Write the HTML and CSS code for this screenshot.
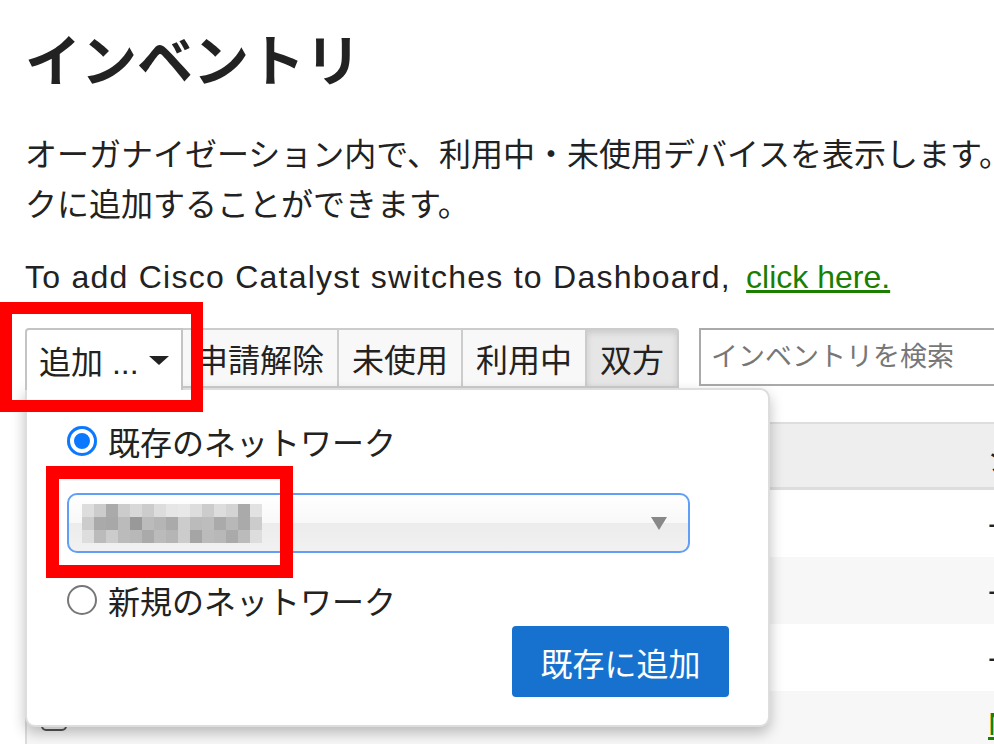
FILE: index.html
```html
<!DOCTYPE html>
<html lang="ja">
    <head>
        <meta charset="UTF-8">
        <meta name="viewport" content="width=device-width, initial-scale=1.0">
        <title>インベントリ</title>
        <link rel="stylesheet" href="styles.css">
    </head>
    <body>
        <div class="page">
            <h1 class="title">インベントリ</h1>
            <p class="intro">オーガナイゼーション内で、利用中・未使用デバイスを表示します。未使用デバイスはネットワー<br>クに追加することができます。</p>
            <p class="catalyst">To add Cisco Catalyst switches to Dashboard, <a href="#">click here.</a></p>

            <div class="inventory">
                <div class="toolbar">
                    <div class="btn-group">
                        <button class="btn btn-add">追加 ...<span class="caret"></span></button>
                        <button class="btn">申請解除</button>
                        <button class="btn">未使用</button>
                        <button class="btn">利用中</button>
                        <button class="btn active">双方</button>
                    </div>
                    <input class="search" type="text" placeholder="インベントリを検索">
                </div>

                <div class="add-menu">
                    <label class="choice"><span class="radio on"></span>既存のネットワーク</label>
                    <div class="net-select">
                        <svg class="blur" width="180" height="39" viewBox="0 0 180 39">
                            <g>
                                <rect x="0" y="0" width="12" height="13" fill="#ddd"/><rect x="12" y="0" width="12" height="13" fill="#ccc"/><rect x="24" y="0" width="12" height="13" fill="#aaa"/><rect x="36" y="0" width="12" height="13" fill="#ccc"/><rect x="48" y="0" width="12" height="13" fill="#d8d8d8"/><rect x="60" y="0" width="12" height="13" fill="#ccc"/><rect x="72" y="0" width="12" height="13" fill="#ddd"/><rect x="84" y="0" width="12" height="13" fill="#e6e6e6"/><rect x="96" y="0" width="12" height="13" fill="#e8e8e8"/><rect x="108" y="0" width="12" height="13" fill="#ddd"/><rect x="120" y="0" width="12" height="13" fill="#ccc"/><rect x="132" y="0" width="12" height="13" fill="#ddd"/><rect x="144" y="0" width="12" height="13" fill="#d4d4d4"/><rect x="156" y="0" width="12" height="13" fill="#aaa"/><rect x="168" y="0" width="12" height="13" fill="#e2e2e2"/>
                                <rect x="0" y="13" width="12" height="13" fill="#ccc"/><rect x="12" y="13" width="12" height="13" fill="#aaa"/><rect x="24" y="13" width="12" height="13" fill="#a8a8a8"/><rect x="36" y="13" width="12" height="13" fill="#bbb"/><rect x="48" y="13" width="12" height="13" fill="#999"/><rect x="60" y="13" width="12" height="13" fill="#bbb"/><rect x="72" y="13" width="12" height="13" fill="#b5b5b5"/><rect x="84" y="13" width="12" height="13" fill="#aaa"/><rect x="96" y="13" width="12" height="13" fill="#ccc"/><rect x="108" y="13" width="12" height="13" fill="#bbb"/><rect x="120" y="13" width="12" height="13" fill="#bdbdbd"/><rect x="132" y="13" width="12" height="13" fill="#aaa"/><rect x="144" y="13" width="12" height="13" fill="#b8b8b8"/><rect x="156" y="13" width="12" height="13" fill="#aaa"/><rect x="168" y="13" width="12" height="13" fill="#ccc"/>
                                <rect x="0" y="26" width="12" height="13" fill="#ddd"/><rect x="12" y="26" width="12" height="13" fill="#bbb"/><rect x="24" y="26" width="12" height="13" fill="#ccc"/><rect x="36" y="26" width="12" height="13" fill="#bbb"/><rect x="48" y="26" width="12" height="13" fill="#b8b8b8"/><rect x="60" y="26" width="12" height="13" fill="#aaa"/><rect x="72" y="26" width="12" height="13" fill="#bbb"/><rect x="84" y="26" width="12" height="13" fill="#b5b5b5"/><rect x="96" y="26" width="12" height="13" fill="#ccc"/><rect x="108" y="26" width="12" height="13" fill="#a5a5a5"/><rect x="120" y="26" width="12" height="13" fill="#bbb"/><rect x="132" y="26" width="12" height="13" fill="#b8b8b8"/><rect x="144" y="26" width="12" height="13" fill="#aaa"/><rect x="156" y="26" width="12" height="13" fill="#bbb"/><rect x="168" y="26" width="12" height="13" fill="#ddd"/>
                            </g>
                        </svg>
                        <span class="select-arrow"></span>
                    </div>
                    <label class="choice second"><span class="radio"></span>新規のネットワーク</label>
                    <button class="btn-primary">既存に追加</button>
                </div>

                <div class="grid">
                    <div class="row head"><div class="cell"></div><div class="cell">ジ</div></div>
                    <div class="row"><div class="cell"><span class="check"></span></div><div class="cell">-</div></div>
                    <div class="row alt"><div class="cell"><span class="check"></span></div><div class="cell">-</div></div>
                    <div class="row"><div class="cell"><span class="check"></span></div><div class="cell">-</div></div>
                    <div class="row alt"><div class="cell"><span class="check"></span></div><div class="cell"><a href="#">N</a></div></div>
                </div>
            </div>

            <div class="mark mark-add"></div>
            <div class="mark mark-select"></div>
        </div>
    </body>
</html>
```

FILE: styles.css
```css
html, body {
    margin: 0;
    overflow: hidden;
}

body {
    font-family: "Liberation Sans", "Noto Sans CJK JP", sans-serif;
    color: #222;
    background: #fff;
}

.page {
    position: relative;
    width: 1500px;
    padding: 29px 0 0 25px;
}

.title {
    margin: 0;
    font-size: 56px;
    line-height: 66px;
    font-weight: bold;
}

.intro {
    margin: 35px 0 0;
    font-size: 32px;
    line-height: 50px;
    white-space: nowrap;
}

.catalyst {
    margin: 22px 0 0;
    font-size: 32px;
    line-height: 50px;
    letter-spacing: 1.25px;
}

.catalyst a {
    color: #1a7f00;
    letter-spacing: 0;
    margin-left: 5px;
}

.inventory {
    position: relative;
    margin-top: 26px;
}

.toolbar {
    display: flex;
    align-items: flex-start;
}

.btn-group {
    display: flex;
}

.btn {
    height: 60px;
    margin: 0 0 0 -2px;
    padding: 0 13px;
    font-family: inherit;
    font-size: 32px;
    color: #222;
    background: #f8f8f8;
    border: 2px solid #ccc;
    display: flex;
    align-items: center;
    white-space: nowrap;
}

.btn-add {
    margin-left: 0;
    width: 158px;
    height: 62px;
    padding: 0 12px;
    background: #fff;
    border-color: #c4c4c4;
    border-bottom: none;
    border-radius: 4px 0 0 0;
    position: relative;
    z-index: 3;
}

.caret {
    display: inline-block;
    margin-left: 10px;
    border-left: 10px solid transparent;
    border-right: 10px solid transparent;
    border-top: 9px solid #222;
}

.btn.active {
    background: #e6e6e6;
    box-shadow: inset 0 3px 6px rgba(0, 0, 0, 0.12);
    border-radius: 0 4px 0 0;
}

.search {
    margin-left: 20px;
    width: 400px;
    height: 58px;
    box-sizing: border-box;
    border: 2px solid #aaa;
    padding: 0 10px;
    font-family: inherit;
    font-size: 27px;
}

.search::placeholder {
    color: #777;
}

.add-menu {
    position: absolute;
    top: 60px;
    left: 0;
    width: 745px;
    height: 339px;
    box-sizing: border-box;
    padding: 26px 39px 0 40px;
    background: #fff;
    border: 2px solid #ddd;
    border-radius: 0 10px 10px 10px;
    box-shadow: 0 6px 14px rgba(0, 0, 0, 0.25);
    z-index: 2;
    display: flex;
    flex-direction: column;
}

.choice {
    display: flex;
    align-items: center;
    height: 50px;
    font-size: 32px;
}

.choice.second {
    margin-top: 22px;
}

.radio {
    width: 30px;
    height: 30px;
    box-sizing: border-box;
    border-radius: 50%;
    border: 2px solid #777;
    margin-right: 11px;
}

.radio.on {
    border: none;
    background: #0a78ff;
    box-shadow: inset 0 0 0 3px #0a78ff, inset 0 0 0 7px #fff;
}

.net-select {
    margin-top: 27px;
    width: 623px;
    height: 60px;
    box-sizing: border-box;
    border: 2px solid #609ef7;
    border-radius: 10px;
    background: linear-gradient(#fff, #f8f8f8 50%, #ececec 50%, #f1f1f1);
    display: flex;
    align-items: center;
    justify-content: space-between;
    padding: 0 21px 0 13px;
}

.blur {
    display: block;
}

.select-arrow {
    border-left: 8px solid transparent;
    border-right: 8px solid transparent;
    border-top: 13px solid #888;
}

.btn-primary {
    align-self: flex-end;
    margin-top: 1px;
    width: 217px;
    height: 71px;
    border: none;
    border-radius: 4px;
    background: #1772cf;
    color: #fff;
    font-family: inherit;
    font-size: 32px;
}

.grid {
    margin-top: 32px;
    border-left: 2px solid #ddd;
}

.row {
    display: grid;
    grid-template-columns: 961px 1fr;
    height: 67px;
    align-items: center;
    font-size: 32px;
}

.row.alt {
    background: #f7f7f7;
}

.row.head {
    height: 63px;
    background: #eee;
    border-top: 2px solid #ddd;
    border-bottom: 3px solid #ddd;
}

.cell:first-child {
    padding-left: 14px;
}

.cell a {
    color: #1a7f00;
}

.check {
    display: block;
    width: 26px;
    height: 26px;
    margin-bottom: 14px;
    border: 2px solid #555;
    border-radius: 5px;
    box-sizing: border-box;
}

.mark {
    position: absolute;
    border-style: solid;
    border-color: #ff0000;
    z-index: 5;
}

.mark-add {
    left: 0;
    top: 302px;
    width: 179px;
    height: 86px;
    border-width: 12px;
}

.mark-select {
    left: 46px;
    top: 466px;
    width: 221px;
    height: 86px;
    border-width: 13px;
}
```
